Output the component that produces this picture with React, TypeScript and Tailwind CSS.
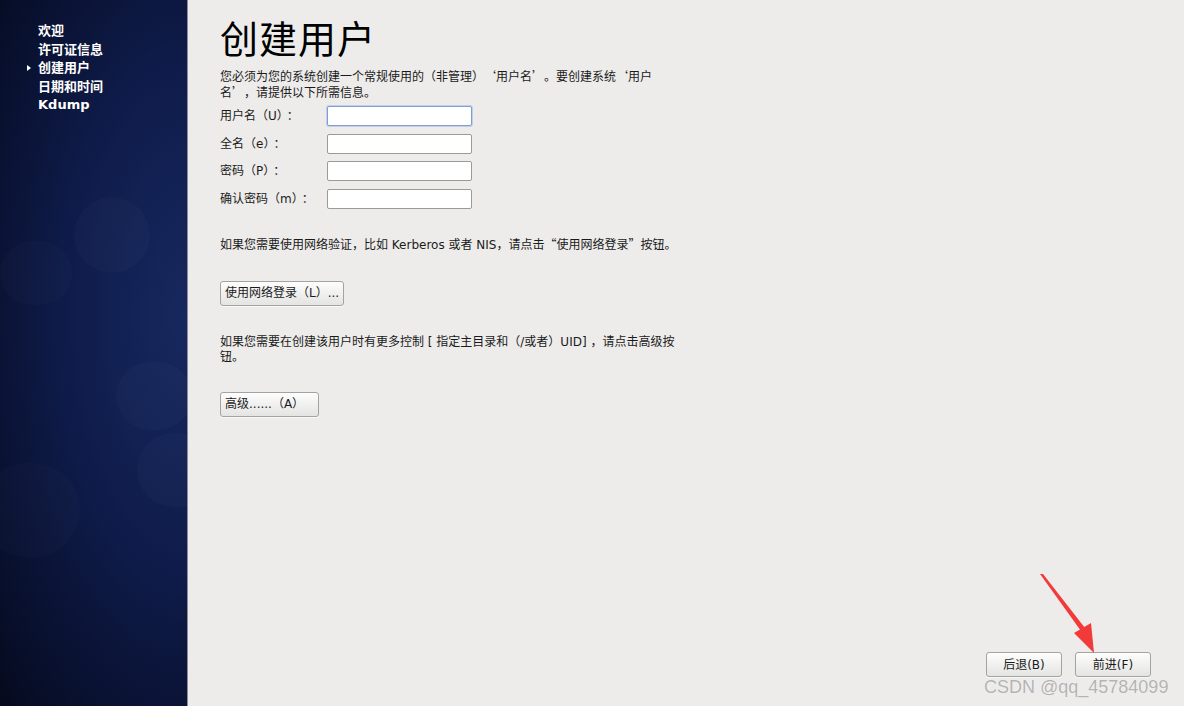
import React from "react";

const font = { fontFamily: '"DejaVu Sans", "Noto Sans CJK SC", sans-serif' };

const navItems = ["欢迎", "许可证信息", "创建用户", "日期和时间", "Kdump"];

const fields = [
  { label: "用户名（U）", focus: true },
  { label: "全名（e）", focus: false },
  { label: "密码（P）", focus: false },
  { label: "确认密码（m）", focus: false },
];

// full-width CJK punctuation cell
const Cj = ({ children, right }: { children: React.ReactNode; right?: boolean }) => (
  <span
    className={
      "inline-block w-[12px] font-['Noto_Sans_CJK_SC',sans-serif] " + (right ? "text-right" : "text-left")
    }
  >
    {children}
  </span>
);

const GtkButton = ({ children, className = "" }: { children: React.ReactNode; className?: string }) => (
  <button
    className={
      "h-[25px] rounded-[3px] border border-[#a3a3a3] bg-gradient-to-b from-[#fdfdfd] to-[#e4e4e2] text-[12px] text-[#1a1a1a] shadow-[0_1px_0_rgba(255,255,255,0.7)] " +
      className
    }
  >
    {children}
  </button>
);

export default function App() {
  return (
    <div className="flex h-[706px] w-full overflow-hidden bg-[#edecea]" style={font}>
      {/* sidebar */}
      <div className="relative w-[188px] shrink-0 overflow-hidden border-r border-[#8a8d96] bg-[radial-gradient(ellipse_at_100%_45%,#17285f_0%,#0f1c4b_45%,#080f2b_85%,#050a1c_100%)]">
        <div className="absolute left-[74px] top-[197px] h-[76px] w-[76px] rounded-full bg-white/[0.02]" />
        <div className="absolute left-[0px] top-[241px] h-[64px] w-[72px] rounded-full bg-white/[0.015]" />
        <div className="absolute left-[116px] top-[362px] h-[68px] w-[76px] rounded-full bg-white/[0.02]" />
        <div className="absolute left-[137px] top-[433px] h-[74px] w-[80px] rounded-full bg-white/[0.02]" />
        <div className="absolute left-[-20px] top-[463px] h-[94px] w-[100px] rounded-full bg-white/[0.015]" />
        <ul className="relative pl-[38px] pt-[22px] text-[13px] font-bold leading-[18.6px] text-white">
          {navItems.map((item) => (
            <li key={item} className="relative">
              {item === "创建用户" && (
                <span className="absolute left-[-11px] top-[6px] h-0 w-0 border-y-[3px] border-l-[4px] border-y-transparent border-l-white" />
              )}
              {item}
            </li>
          ))}
        </ul>
      </div>

      {/* main */}
      <div className="relative flex flex-1 flex-col pl-[32px] text-[12px] text-[#1a1a1a]">
        <h1 className="pt-[18px] text-[38px] font-normal leading-[44px] tracking-[1px] text-black">创建用户</h1>
        <p className="mt-[7px] leading-[13.5px]">
          您必须为您的系统创建一个常规使用的（非管理）<Cj right>‘</Cj>用户名<Cj>’</Cj>。要创建系统<Cj right>‘</Cj>用户
          <br />
          名<Cj>’</Cj>，请提供以下所需信息。
        </p>

        <div className="mt-[6px] flex flex-col gap-[7.5px]">
          {fields.map((f) => (
            <div key={f.label} className="flex items-center">
              <span className="w-[107px] leading-[20px]">
                {f.label}
                <span className="pl-[4px]">：</span>
              </span>
              <input
                type={f.label.startsWith("密码") || f.label.startsWith("确认") ? "password" : "text"}
                className={
                  "h-[20px] w-[145px] rounded-[2px] border bg-white outline-none " +
                  (f.focus ? "border-[#7d9fd3] shadow-[0_0_0_1px_rgba(125,159,211,0.35)]" : "border-[#9a9a9a]")
                }
              />
            </div>
          ))}
        </div>

        <p className="mt-[27px] leading-[15px]">
          如果您需要使用网络验证，比如 Kerberos 或者 NIS，请点击<Cj right>“</Cj>使用网络登录<Cj>”</Cj>按钮。
        </p>
        <div className="mt-[28px]">
          <GtkButton className="w-[124px] pr-[2px] text-left pl-[4px]">使用网络登录（L）...</GtkButton>
        </div>

        <p className="mt-[29px] leading-[15px]">
          如果您需要在创建该用户时有更多控制 [ 指定主目录和（/或者）UID] ，请点击高级按
          <br />
          钮。
        </p>
        <div className="mt-[27px]">
          <GtkButton className="w-[99px] pl-[4px] text-left">高级......（A）</GtkButton>
        </div>

        <div className="mt-auto flex justify-end gap-[13px] pb-[29px] pr-[33px]">
          <GtkButton className="w-[76px]">后退(B)</GtkButton>
          <GtkButton className="w-[76px]">前进(F)</GtkButton>
        </div>

        {/* annotation arrow */}
        <svg className="pointer-events-none absolute left-[840px] top-[570px]" width="90" height="90" viewBox="0 0 90 90">
          <polygon points="12,4 15,4 57,58 53,61" fill="#f23a3a" />
          <polygon points="66,83 46,63 63,53" fill="#f23a3a" />
        </svg>

        {/* watermark */}
        <div
          className="pointer-events-none absolute left-[796px] top-[676px] text-[18px] leading-[22px] text-[#b3b3b3]"
          style={{ fontFamily: '"Liberation Sans", Arial, sans-serif', textShadow: "0 0 1px #fff" }}
        >
          CSDN @qq_45784099
        </div>
      </div>
    </div>
  );
}
